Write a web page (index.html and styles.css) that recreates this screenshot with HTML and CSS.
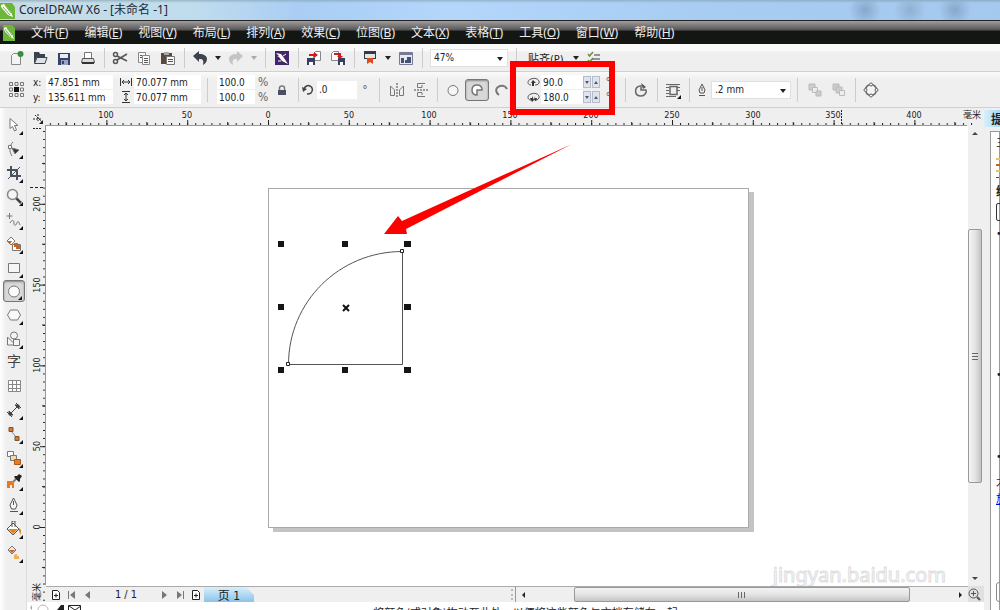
FILE: index.html
```
<!DOCTYPE html>
<html lang="zh-CN">
<head>
    <meta charset="UTF-8">
    <meta name="viewport" content="width=device-width, initial-scale=1.0">
    <title>CorelDRAW X6 - [未命名 -1]</title>
    <link rel="stylesheet" href="styles.css">
</head>
<body>
    <header class="titlebar">
        <svg class="logo" width="16" height="18" viewBox="0 0 16 18"><path fill="#6cb63a" d="M0 2h12l3 4v12H0z"/><path fill="#fff" d="M1 4l3-1 7 8 2 5-5-2-7-8z"/><path stroke="#6cb63a" d="M3 6l7 8M5 4l6 8"/></svg>
        <h1>CorelDRAW X6 - [未命名 -1]</h1>
    </header>

    <nav class="menubar">
        <svg class="doc-logo" width="12" height="16" viewBox="0 0 12 16"><path fill="#6cb63a" d="M0 0h9l3 3v13H0z"/><path fill="#fff" d="M1 3l2-1 6 7 2 5-4-2-6-7z"/><path stroke="#6cb63a" d="M2 4l6 8M4 3l5 7"/></svg>
        <a href="#">文件(<u>F</u>)</a>
        <a href="#">编辑(<u>E</u>)</a>
        <a href="#">视图(<u>V</u>)</a>
        <a href="#">布局(<u>L</u>)</a>
        <a href="#">排列(<u>A</u>)</a>
        <a href="#">效果(<u>C</u>)</a>
        <a href="#">位图(<u>B</u>)</a>
        <a href="#">文本(<u>X</u>)</a>
        <a href="#">表格(<u>T</u>)</a>
        <a href="#">工具(<u>O</u>)</a>
        <a href="#">窗口(<u>W</u>)</a>
        <a href="#">帮助(<u>H</u>)</a>
    </nav>

    <div class="toolbar">
        <button class="btn" aria-label="新建"><svg viewBox="0 0 16 16"><path fill="#f4f4f4" stroke="#888" d="M3.500 5.500l2-2h7v11h-9z"/><circle cx="12.500" cy="4" r="3" fill="#3c8a3a"/></svg></button>
        <button class="btn" aria-label="打开"><svg viewBox="0 0 16 16"><path fill="#39424f" d="M2 2h5l1 2h5v3H5l-3 7z"/><path fill="#dfe3e8" stroke="#39424f" d="M2.500 13.500l2.500-6h10l-2 6z"/></svg></button>
        <button class="btn" aria-label="保存"><svg viewBox="0 0 16 16"><path fill="#35426b" d="M2 3h12v12H2z"/><path fill="#e8ebf2" d="M4 4h8v4H4z"/><path fill="#9aa5c0" d="M5 10h7v5H5z"/><path fill="#35426b" d="M6 11h2v3H6z"/></svg></button>
        <button class="btn" aria-label="打印"><svg viewBox="0 0 16 16"><path fill="#fff" stroke="#777" d="M4.500 9V2.500h7V9"/><path fill="#dcdcdc" stroke="#555" d="M2.500 8.500h11l1 4h-13z"/><path stroke="#333" stroke-width="2" d="M2 13h12"/></svg></button>
        <span class="sep"></span>
        <button class="btn" aria-label="剪切"><svg viewBox="0 0 16 16" fill="none" stroke="#555" stroke-width="1.500"><circle cx="3.500" cy="4.500" r="2"/><circle cx="3.500" cy="11.500" r="2"/><path d="M5 6l10 5M5 10l10-6"/></svg></button>
        <button class="btn" aria-label="复制"><svg viewBox="0 0 16 16" fill="#f8f8f8" stroke="#888"><path d="M2.500 2.500h7v10h-7z"/><path d="M6.500 5.500h7v9h-7z"/><path stroke="#555" d="M8 8.500h4M8 10.500h4M8 12.500h4M4 5.500h2M4 7.500h2"/></svg></button>
        <button class="btn" aria-label="粘贴"><svg viewBox="0 0 16 16"><path fill="#5b4a3c" d="M1 3h11v11H1z"/><path fill="#aaa" d="M4 2h5v3H4z"/><path fill="#f8f8f8" stroke="#777" d="M6.500 6.500h8v8h-8z"/><path stroke="#555" d="M8 9.500h5M8 11.500h5"/></svg></button>
        <span class="sep"></span>
        <button class="btn" aria-label="撤消"><svg viewBox="0 0 16 16"><path fill="#3d424c" d="M1 6l6-5v3c5 0 8 2 8 5 0 3-2 5-4 6 1-5 0-6-4-6v3z"/></svg></button>
        <button class="drop" aria-label="撤消列表"></button>
        <button class="btn" aria-label="重做"><svg viewBox="0 0 16 16"><path fill="#c4c4c4" d="M15 6L9 1v3C4 4 1 6 1 9c0 3 2 5 4 6-1-5 0-6 4-6v3z"/></svg></button>
        <button class="drop pale" aria-label="重做列表"></button>
        <span class="sep wide"></span>
        <button class="btn" aria-label="欢迎屏幕"><svg viewBox="0 0 16 16"><path fill="#46246b" d="M1 1h14v14H1z"/><path fill="#fff" d="M2 3l5 1 3 4 4 6-6-3-3-4-2 0 2-1z"/><path stroke="#fff" d="M9 6l3-2M4 11l3 0"/></svg></button>
        <span class="sep"></span>
        <button class="btn" aria-label="导入"><svg viewBox="0 0 16 16"><path fill="#fff" stroke="#888" d="M7.500 3.500l2-2h5v9h-7z"/><path fill="#34405f" d="M1 8h8v7H1z"/><path fill="#fff" d="M3 12h4v3H3z"/><path fill="#cf1d1d" d="M3 4h5V2l4 3-4 3V6H3z"/></svg></button>
        <button class="btn" aria-label="导出"><svg viewBox="0 0 16 16"><path fill="#fff" stroke="#888" d="M1.500 3.500l2-2h5v9h-7z"/><path fill="#34405f" d="M8 8h7v7H8z"/><path fill="#fff" d="M10 12h3v3h-3z"/><path fill="#cf1d1d" d="M4 3h7v3h2l-3 3-3-3h1V5H4z"/></svg></button>
        <span class="sep"></span>
        <button class="btn" aria-label="应用程序启动器"><svg viewBox="0 0 16 16"><path fill="#333b48" d="M2 1h12v8H2z"/><path fill="#e6e6e6" d="M3 4h10v4H3z"/><path fill="#df4a1b" d="M5 8h6v6l-3-2-3 2z"/></svg></button>
        <button class="drop" aria-label="启动器列表"></button>
        <button class="btn" aria-label="选项"><svg viewBox="0 0 16 16"><path fill="#e8e8ee" stroke="#777c92" d="M1.500 2.500h13v12h-13z"/><path fill="#777c92" d="M2 3h12v2H2z"/><path fill="#46517a" d="M3 8h3v5H3zM7 10h2v3H7zM9 7h4v6H9z"/></svg></button>
        <span class="sep"></span>
        <span class="combo zoom-combo"><select aria-label="缩放级别"><option>47%</option></select></span>
        <span class="sep"></span>
        <button class="snap">贴齐(P)</button>
        <button class="drop" aria-label="贴齐列表"></button>
        <button class="btn" aria-label="显示选项"><svg viewBox="0 0 16 16" fill="none"><path stroke="#6b9438" stroke-width="1.500" d="M2 4l1.500 2L7 2M2 10l1.500 2L7 8"/><path stroke="#777" stroke-width="1.500" d="M8 5h6M6 9h8M8 13h6"/></svg></button>
    </div>

    <div class="propbar">
        <svg class="origin" width="17" height="17" viewBox="0 0 17 17" fill="none" stroke="#777"><path d="M1.500 1.500h3v3h-3zM7 1.500h3v3H7zM12.500 1.500h3v3h-3zM1.500 7h3v3h-3zM12.500 7h3v3h-3zM1.500 12.500h3v3h-3zM7 12.500h3v3H7zM12.500 12.500h3v3h-3z"/><path fill="#111" stroke="none" d="M6 6h5v5H6z"/></svg>
        <div class="pair position">
            <label for="pos-x">x:</label><input id="pos-x" value="47.851 mm">
            <label for="pos-y">y:</label><input id="pos-y" value="135.611 mm">
        </div>
        <div class="pair size">
            <label for="obj-w" aria-label="宽度"><svg width="12" height="10" viewBox="0 0 12 10"><path fill="none" stroke="#333" d="M.5 1v8M11.500 1v8M2 5h8M4 3L2 5l2 2M8 3l2 2-2 2"/></svg></label><input id="obj-w" value="70.077 mm">
            <label for="obj-h" aria-label="高度"><svg width="10" height="12" viewBox="0 0 10 12"><path fill="none" stroke="#333" d="M1 .5h8M1 11.500h8M5 2v8M3 4l2-2 2 2M3 8l2 2 2-2"/></svg></label><input id="obj-h" value="70.077 mm">
        </div>
        <span class="sep wide"></span>
        <div class="pair scale">
            <input id="scale-x" value="100.0"><label for="scale-x">%</label>
            <input id="scale-y" value="100.0"><label for="scale-y">%</label>
        </div>
        <button class="btn" aria-label="锁定比率"><svg viewBox="0 0 16 16"><path fill="none" stroke="#777" stroke-width="1.500" d="M5.500 8V6q0-2 2.500-2t2.500 2v2"/><path fill="#4a4f62" d="M4 8h8v5H4z"/></svg></button>
        <span class="sep"></span>
        <label class="rotate" for="angle" aria-label="旋转角度"><svg width="12" height="12" viewBox="0 0 12 12"><path fill="none" stroke="#444" stroke-width="1.500" d="M2 5c1-3 4-4 6-3 3 1 3 5 1 7-1 1-3 1-4 1"/><path fill="#444" d="M0 3l1 5 4-3z"/></svg></label>
        <input class="angle" id="angle" value=".0">
        <span class="degree">°</span>
        <span class="sep wide"></span>
        <button class="btn" aria-label="水平镜像"><svg viewBox="0 0 16 16" fill="none" stroke="#777"><path d="M1.500 4v9.500h4V8zM14.500 4v9.500h-4V8z"/><path stroke="#444" stroke-dasharray="2 1" d="M8 1v14"/></svg></button>
        <button class="btn" aria-label="垂直镜像"><svg viewBox="0 0 16 16" fill="none" stroke="#777"><path d="M12 1.500H4.500v4H9V3M12 14.500H4.500v-4H9V13"/><path stroke="#444" stroke-dasharray="2 1" d="M1 8h14"/></svg></button>
        <span class="sep"></span>
        <button class="btn" aria-label="椭圆形"><svg viewBox="0 0 16 16"><circle cx="8" cy="8.500" r="5" fill="#f6f6f6" stroke="#777"/></svg></button>
        <button class="btn pressed" aria-label="饼图"><svg viewBox="0 0 16 16"><path fill="#fff" stroke="#777" stroke-width="1.500" d="M8 13V8h5c0-4-3-5-5-5-3 0-5 2-5 5s2 5 5 5z"/></svg></button>
        <button class="btn" aria-label="弧形"><svg viewBox="0 0 16 16"><path fill="none" stroke="#777" stroke-width="2" d="M6 13c-3-2-4-6-1-8s7-2 9 2"/></svg></button>
        <div class="pair angles">
            <label for="start" aria-label="起始角度"><svg width="13" height="10" viewBox="0 0 13 10"><path fill="none" stroke="#555" d="M4 8C0 8 0 3 4 2c5-2 9 1 8 4-1 2-3 2-4 2"/><path fill="#333" d="M6 3l3 3H7v3H5V6H4z"/></svg></label>
            <input id="start" value="90.0"><button class="spin" aria-label="减小"></button><button class="spin up" aria-label="增大"></button><span>°</span>
            <label for="end" aria-label="结束角度"><svg width="13" height="10" viewBox="0 0 13 10"><path fill="none" stroke="#555" d="M4 8C0 8 0 3 4 2c5-2 9 1 8 4-1 2-3 2-4 2"/><path fill="#333" d="M3 6h2V4l2 4-2 2zM10 6H8V4L7 8l2 1z"/></svg></label>
            <input id="end" value="180.0"><button class="spin" aria-label="减小"></button><button class="spin up" aria-label="增大"></button><span>°</span>
        </div>
        <span class="sep"></span>
        <button class="btn" aria-label="更改方向"><svg viewBox="0 0 16 16" fill="none" stroke="#666"><path stroke-width="1.500" d="M7 4c-6 1-6 10 1 10 4 0 6-4 5-6H8V3"/><path fill="#555" stroke="none" d="M8 1l5 4-3 2z"/></svg></button>
        <span class="sep"></span>
        <button class="btn flyout" aria-label="文本换行"><svg viewBox="0 0 16 16" fill="none" stroke="#666"><path d="M1 2.500h14M1 5.500h3M1 8.500h3M1 11.500h3M1 14.500h10M12 5.500h3M12 8.500h3"/><path fill="#eee" stroke-width="1.500" d="M5 4.500h7v8H5z"/></svg></button>
        <span class="sep"></span>
        <label class="pen" for="outline" aria-label="轮廓宽度"><svg width="10" height="14" viewBox="0 0 10 14" fill="none" stroke="#555"><path d="M5 1L2 7l1 3h4l1-3zM5 4v4M2 12.500h6"/></svg></label>
        <span class="combo outline-combo"><select id="outline"><option>.2 mm</option></select></span>
        <span class="sep wide"></span>
        <button class="btn" aria-label="到图层前面"><svg viewBox="0 0 16 16" fill="#ccc" stroke="#bbb"><path d="M2 2h6v6H2z"/><path fill="#eee" d="M5.500 5.500h5v5h-5z"/><path d="M9 9h5v5H9z"/></svg></button>
        <button class="btn" aria-label="到图层后面"><svg viewBox="0 0 16 16" fill="#ccc" stroke="#bbb"><path d="M2 2h6v6H2z"/><path d="M5 5h6v6H5z"/><path fill="#eee" d="M8.500 8.500h5v5h-5z"/></svg></button>
        <span class="sep"></span>
        <button class="btn" aria-label="转换为曲线"><svg viewBox="0 0 16 16" fill="#f4f4f4" stroke="#666"><circle cx="8" cy="8" r="5.500" stroke-width="1.500"/><circle cx="8" cy="2.500" r="1.500"/><circle cx="8" cy="13.500" r="1.500"/><circle cx="2.500" cy="8" r="1.500"/><circle cx="13.500" cy="8" r="1.500"/></svg></button>
    </div>

    <div class="workspace">
        <aside class="toolbox">
            <button class="tool flyout" aria-label="选择"><svg viewBox="0 0 16 16"><path fill="#fff" stroke="#777" d="M4 1.500v10l2.500-2 2 4.500 2-1-2-4.500H12z"/></svg></button>
            <button class="tool flyout" aria-label="形状"><svg viewBox="0 0 16 16" fill="none" stroke="#777"><path d="M7 1C3 5 3 10 6 15"/><path fill="#fff" d="M2.500 4.500h3v3h-3z"/><path fill="#333" d="M6 7l7 2-4 4z"/></svg></button>
            <button class="tool flyout" aria-label="裁剪"><svg viewBox="0 0 16 16" fill="none" stroke="#4a5260" stroke-width="2"><path d="M5 1v10h10M1 5h10v10"/><path stroke-width="1" d="M2 14L14 2"/></svg></button>
            <button class="tool flyout" aria-label="缩放"><svg viewBox="0 0 16 16"><path stroke="#444" stroke-width="2.500" d="M10 10l5 5"/><circle cx="6.500" cy="6.500" r="5" fill="#f4f7f9" stroke="#888" stroke-width="1.500"/></svg></button>
            <button class="tool flyout" aria-label="手绘"><svg viewBox="0 0 16 16" fill="none" stroke="#777"><path d="M3.500 1v6M.5 4h6M4 11c2-4 4-3 4 0s2 3 3 0 2-1 3 2"/></svg></button>
            <button class="tool flyout" aria-label="智能填充"><svg viewBox="0 0 16 16"><path fill="#fff" stroke="#777" d="M6.500 8.500h8v6h-8zM5 1l4 4-4 4-4-4z"/><path fill="#c9621e" d="M1 5h5l-2 3zM8 7h4v2h2v4h-4v-2H8z"/></svg></button>
            <button class="tool flyout" aria-label="矩形"><svg viewBox="0 0 16 16"><path fill="#f5f6f7" stroke="#777" d="M2.500 3.500h11v9h-11z"/></svg></button>
            <button class="tool flyout active" aria-label="椭圆形"><svg viewBox="0 0 16 16"><circle cx="8" cy="8.500" r="5.500" fill="#fafafa" stroke="#777"/></svg></button>
            <button class="tool flyout" aria-label="多边形"><svg viewBox="0 0 16 16"><path fill="#fafafa" stroke="#777" d="M4.500 3h7l3 5-3 5h-7l-3-5z"/></svg></button>
            <button class="tool flyout" aria-label="基本形状"><svg viewBox="0 0 16 16" fill="#f4f4f4" stroke="#777"><path d="M1.500 6v8h8z"/><path d="M7.500 8.500h6v6h-6z"/><circle cx="8" cy="4.500" r="3.500"/></svg></button>
            <button class="tool glyph">字</button>
            <button class="tool" aria-label="表格"><svg viewBox="0 0 16 16"><path fill="#fff" stroke="#888" d="M2.500 2.500h12v11h-12zM6.500 3v10M10.500 3v10M3 6.500h11M3 10.500h11"/></svg></button>
            <button class="tool flyout" aria-label="度量"><svg viewBox="0 0 16 16" fill="none" stroke="#444"><path d="M3 13L13 3M1 10l5 5M10 1l5 5"/><path fill="#444" d="M3 13V9l4 4zM13 3v4L9 3z"/></svg></button>
            <button class="tool flyout" aria-label="连接器"><svg viewBox="0 0 16 16"><path fill="none" stroke="#7784a0" d="M5 5l6 7"/><path fill="#d4792a" stroke="#7a5537" d="M3 1.500h4v4H3zM9 10.500h4v4H9z"/></svg></button>
            <button class="tool flyout" aria-label="调和"><svg viewBox="0 0 16 16" stroke="#777"><path fill="#fff" d="M1.500 1.500h6v5h-6z"/><path fill="#f2dba4" d="M4.500 5.500h6v5h-6z"/><path fill="#ea7a20" stroke="#a75a1c" d="M8.500 9.500h6v5h-6z"/></svg></button>
            <button class="tool flyout" aria-label="滴管"><svg viewBox="0 0 16 16"><path stroke="#777" stroke-width="2" d="M6 10l5-5"/><path fill="#222" d="M9 3l2 0 2-2 3 2-2 3v2l-1 1-5-5z"/><path fill="#e77a1e" d="M1 8h7v7H6v-3H4v3H1z"/></svg></button>
            <button class="tool flyout" aria-label="轮廓笔"><svg viewBox="0 0 16 16" fill="#f8f8f8" stroke="#555"><path d="M7.500 1L4 8l1.500 4h4L11 8zM7.500 4v4M4 14.500h8"/></svg></button>
            <button class="tool flyout" aria-label="填充"><svg viewBox="0 0 16 16"><path fill="#fff" stroke="#555" d="M7 2l6 6-6 6-6-6z"/><path fill="#df861f" d="M2 8h10l-5 5zM13 7l2 2v5l-2-4z"/><path fill="none" stroke="#555" d="M6 6V0h3v6"/></svg></button>
            <button class="tool flyout" aria-label="交互式填充"><svg viewBox="0 0 16 16"><path fill="#e8e8e8" stroke="#777" d="M6 1l4 4-4 4-4-4z"/><path fill="#c9621e" d="M3 5h6L6 8z"/><path fill="#edb05d" d="M9 9h2v2h2v3H8v-3z"/></svg></button>
        </aside>

        <main class="drawing">
            <svg class="ruler-top">
                <defs>
                    <pattern id="h-minor" x="241" width="8.080" height="19" patternUnits="userSpaceOnUse"><path fill="#222" d="M0 15h1v2H0z"/></pattern>
                    <pattern id="h-major" x="241" width="80.800" height="19" patternUnits="userSpaceOnUse"><path fill="#222" d="M0 12h1v5H0zM40 14h1v3h-1z"/></pattern>
                </defs>
                <rect x="20" width="932" height="19" fill="url(#h-minor)"/>
                <rect x="20" width="932" height="19" fill="url(#h-major)"/>
                <g text-anchor="middle">
                    <text x="79" y="10">100</text><text x="160" y="10">50</text><text x="241" y="10">0</text>
                    <text x="322" y="10">50</text><text x="402" y="10">100</text><text x="483" y="10">150</text>
                    <text x="564" y="10">200</text><text x="645" y="10">250</text><text x="726" y="10">300</text>
                    <text x="806" y="10">350</text><text x="887" y="10">400</text><text x="945" y="10">毫米</text>
                </g>
                <path fill="none" stroke="#222" stroke-dasharray="2 1" d="M814.500 2v16M8 7l8 8M11 6v7M6 11h9"/>
                <path fill="#222" d="M16 16v-4l-4 4z"/>
            </svg>
            <svg class="ruler-left">
                <defs>
                    <pattern id="v-minor" y="401" width="19" height="8.080" patternUnits="userSpaceOnUse"><path fill="#222" d="M16 0h2v1h-2z"/></pattern>
                    <pattern id="v-major" y="401" width="19" height="80.800" patternUnits="userSpaceOnUse"><path fill="#222" d="M13 0h5v1h-5zM15 40h3v1h-3z"/></pattern>
                </defs>
                <rect width="19" height="100%" fill="url(#v-minor)"/>
                <rect width="19" height="100%" fill="url(#v-major)"/>
                <g text-anchor="middle">
                    <text transform="translate(13 78) rotate(-90)">200</text>
                    <text transform="translate(13 159) rotate(-90)">150</text>
                    <text transform="translate(13 239) rotate(-90)">100</text>
                    <text transform="translate(13 320) rotate(-90)">50</text>
                    <text transform="translate(13 401) rotate(-90)">0</text>
                    <text transform="translate(13 466) rotate(-90)">毫米</text>
                </g>
                <path stroke="#222" stroke-dasharray="3 2" d="M3 61.500h15"/>
                <path stroke="#222" stroke-dasharray="2 1" d="M6 2.500h8"/>
            </svg>
            <svg class="canvas">
                <rect x="227" y="66" width="481" height="340" fill="#c4c4c4"/>
                <rect x="222.500" y="62.500" width="480" height="339" fill="#fff" stroke="#aaa"/>
                <path fill="none" stroke="#555" d="M356.500 125.500C293 125.500 242.500 176 242.500 238.500H356.500z"/>
                <path fill="#fff" stroke="#222" d="M354.500 123.500h3v3h-3zM240.500 236.500h3v3h-3z"/>
                <path fill="#151515" d="M232 115h6v6h-6zM296 115h6v6h-6zM358 115h7v6h-7zM232 178h6v6h-6zM358 178h7v6h-7zM232 241h6v6h-6zM296 241h6v6h-6zM358 241h7v6h-7z"/>
                <path stroke="#111" stroke-width="2" d="M297 179l6 6M303 179l-6 6"/>
                <text class="watermark" x="900" y="456">jingyan.baidu.com</text>
            </svg>
            <div class="vscroll">
                <span class="arrow up"></span>
                <div class="track"><div class="thumb"><i></i></div></div>
                <span class="arrow down"></span>
            </div>
            <div class="pagebar">
                <div class="pages">
                    <button aria-label="在前面添加页"><svg width="10" height="12" viewBox="0 0 10 12"><path fill="#fff" stroke="#222" d="M1.500 1.500h5l2 2v7h-7zM3 6.500h4M5 4.500v4"/></svg></button>
                    <button aria-label="首页"><svg width="8" height="8" viewBox="0 0 8 8"><path fill="#777" d="M0 0h1v8H0zM7 0v8L2 4z"/></svg></button>
                    <button aria-label="上一页"><svg width="8" height="8" viewBox="0 0 8 8"><path fill="#777" d="M6 0v8L1 4z"/></svg></button>
                    <span class="count">1 / 1</span>
                    <button aria-label="下一页"><svg width="8" height="8" viewBox="0 0 8 8"><path fill="#777" d="M2 0v8l5-4z"/></svg></button>
                    <button aria-label="末页"><svg width="8" height="8" viewBox="0 0 8 8"><path fill="#777" d="M7 0h1v8H7zM1 0v8l5-4z"/></svg></button>
                    <button aria-label="在后面添加页"><svg width="10" height="12" viewBox="0 0 10 12"><path fill="#fff" stroke="#222" d="M1.500 1.500h5l2 2v7h-7zM3 6.500h4M5 4.500v4"/></svg></button>
                    <button class="tab">页 1</button>
                    <span class="grip"></span>
                </div>
                <div class="hscroll">
                    <span class="arrow left"></span>
                    <div class="track"><div class="thumb"><i></i></div></div>
                    <span class="arrow right"></span>
                </div>
            </div>
            <button class="navigator" aria-label="导航器"><svg width="13" height="13" viewBox="0 0 13 13" fill="none" stroke="#555"><circle cx="5.500" cy="5.500" r="4.500"/><path d="M3 5.500h5M5.500 3v5"/><path stroke-width="2" d="M9 9l3 3"/></svg></button>
            <footer class="palette">
                <svg width="56" height="8" viewBox="0 0 56 8"><path fill="#aaa" d="M5 3v5L3 6z"/><circle cx="16" cy="8" r="5" fill="#fff" stroke="#bbb"/><path fill="#222" d="M30 8l4-5h3v5z"/><path fill="#fff" stroke="#222" d="M41.500 3.500h12v8h-12zM42 4l6 4 6-4"/></svg>
                <p>将颜色(或对象)拖动至此处，以便将这些颜色与文档存储在一起</p>
            </footer>
        </main>

        <aside class="docker">
            <h2>提示</h2>
            <div class="hints">
                <p class="name">三点椭圆形</p>
                <svg width="10" height="17" viewBox="0 0 10 17"><path stroke="#e3c65c" stroke-width="2" d="M0 2h8M0 14h8"/><path stroke="#c9621e" stroke-width="2" d="M0 8h8"/></svg>
                <h3>绘制</h3>
                <div class="box"></div>
                <ul>
                    <li>要绘制椭圆形</li>
                    <li>要绘制圆形</li>
                    <li>要从中心绘制</li>
                </ul>
                <p>才能</p>
                <a href="#">放大</a>
                <button class="more" aria-label="更多"></button>
            </div>
        </aside>
    </div>

    <svg class="callout" width="106" height="174" viewBox="510 61 106 174">
        <rect x="513" y="64" width="99" height="48" fill="none" stroke="#fd0000" stroke-width="6"/>
        <path fill="#fd0000" d="M384 234l14-18 4 5 170-77-166 85 1 5z"/>
    </svg>
</body>
</html>
```
FILE: styles.css
```
* {
    box-sizing: border-box;
}
body {
    margin: 0;
    height: 100vh;
    display: flex;
    flex-direction: column;
    overflow: hidden;
    background: #efefef;
    color: #222;
    font-family: "DejaVu Sans Condensed", "Noto Sans CJK SC", sans-serif;
    font-size: 10px;
}
button {
    padding: 0;
    border: none;
    background: none;
    font: inherit;
    color: inherit;
    flex: none;
}
input, select {
    border: none;
    background: #fff;
    font: inherit;
    color: #222;
    min-width: 0;
}
svg {
    display: block;
    flex: none;
}

/* title and menu */
.titlebar {
    height: 20px;
    flex: none;
    display: flex;
    align-items: center;
    gap: 3px;
    background:
        radial-gradient(circle at 865px 10px, #87a8cb, transparent 16px),
        radial-gradient(circle at 910px 10px, #8fb0d2, transparent 16px),
        radial-gradient(circle at 955px 10px, #87a8cb, transparent 16px),
        linear-gradient(#7f9cad99, transparent 3px),
        linear-gradient(90deg, #c9dce4, #bfdcee 20%, #a9cdf3 30%, #b4d6fb 45%, #a8ccf2 70%, #a4c8ee);
}
.titlebar h1 {
    margin: 0;
    font: 12px/18px "Noto Sans", "Noto Sans CJK SC", sans-serif;
    color: #1c2a36;
}
.menubar {
    height: 24px;
    flex: none;
    display: flex;
    align-items: center;
    gap: 16px;
    padding-left: 3px;
    border-top: 1px solid #222;
    background: linear-gradient(#a39d9d, #555 9px, #141614 10px);
}
.menubar a {
    color: #eee;
    font: 12px/20px "Noto Sans", "Noto Sans CJK SC", sans-serif;
    text-decoration: none;
    white-space: nowrap;
}

/* toolbars */
.toolbar, .propbar {
    display: flex;
    align-items: center;
    flex: none;
    padding-left: 4px;
    border-bottom: 1px solid #d0d0d0;
    background: linear-gradient(#f9f9f9 7px, #efefef 8px);
}
.toolbar {
    height: 28px;
}
.propbar {
    height: 36px;
    padding-left: 8px;
    background: linear-gradient(#fafafa, #efefef 8px);
}
.btn {
    position: relative;
    width: 24px;
    height: 22px;
    display: flex;
    align-items: center;
    justify-content: center;
}
.btn svg {
    width: 16px;
    height: 16px;
}
.btn.pressed {
    border: 1px solid #777;
    border-radius: 3px;
    background: #d8d8d8;
    box-shadow: inset 0 1px 2px #888;
}
.sep {
    flex: none;
    width: 8px;
    height: 20px;
    background: linear-gradient(#ccc, #ccc) center / 1px 100% no-repeat;
}
.sep.wide {
    width: 10px;
}
.propbar .sep {
    height: 24px;
}
.propbar .sep.wide {
    width: 12px;
}
.drop {
    width: 12px;
    height: 20px;
}
.drop::before, .combo::after {
    content: "";
    display: block;
    margin: 0 auto;
    width: 0;
    border: 3px solid transparent;
    border-top: 4px solid #222;
    border-bottom: none;
}
.drop.pale::before {
    border-top-color: #aaa;
}
.combo {
    position: relative;
    display: flex;
    height: 18px;
    background: #fff;
    border: 1px solid #e0e0e0;
}
.combo select {
    appearance: none;
    flex: 1;
    padding: 0 3px;
}
.combo::after {
    position: absolute;
    right: 4px;
    top: 7px;
}
.zoom-combo {
    width: 78px;
    margin: 0 4px;
}
.outline-combo {
    width: 80px;
}
.snap {
    margin-left: 8px;
    width: 42px;
    font-size: 11px;
    text-align: left;
    white-space: nowrap;
}
.pair {
    flex: none;
    display: grid;
    grid-auto-rows: 15px;
    align-items: center;
}
.pair input {
    height: 14px;
    padding: 0 2px;
}
.pair label svg {
    margin: 0 auto;
}
.position {
    margin-left: 8px;
    grid-template-columns: 13px 67px;
}
.size {
    margin-left: 4px;
    grid-template-columns: 17px 67px;
}
.scale {
    margin-left: 4px;
    grid-template-columns: 38px 15px;
}
.scale label {
    color: #666;
    font-size: 12px;
    padding-left: 3px;
}
.rotate {
    width: 15px;
}
.angle {
    width: 40px;
    height: 18px;
    padding: 0 2px;
}
.degree {
    width: 16px;
    text-align: center;
    font-size: 12px;
    color: #666;
}
.angles {
    margin: 0 10px 0 12px;
    grid-template-columns: 16px 42px 9px 9px 10px;
}
.angles span {
    text-align: right;
    font-size: 12px;
    color: #666;
}
.spin {
    width: 8px;
    height: 12px;
    border: 1px solid #b5bccb;
    background: #dfe3ee;
}
.spin::before {
    content: "";
    display: block;
    width: 0;
    margin: 0 auto;
    border: 2px solid transparent;
    border-top: 3px solid #556;
    border-bottom: none;
}
.spin.up::before {
    border: 2px solid transparent;
    border-top: none;
    border-bottom: 3px solid #556;
}
.pen {
    width: 18px;
    padding-left: 4px;
}
.flyout::after {
    content: "";
    position: absolute;
    right: 4px;
    bottom: 2px;
    border-left: 4px solid transparent;
    border-bottom: 4px solid #111;
}

/* workspace */
.workspace {
    flex: 1;
    min-height: 0;
    display: flex;
}
.toolbox {
    width: 27px;
    flex: none;
    display: flex;
    flex-direction: column;
    justify-content: space-between;
    padding: 6px 2px 46px 3px;
    border-right: 1px solid #ddd;
    background: linear-gradient(90deg, #fff, #efefef 6px);
}
.tool {
    position: relative;
    width: 22px;
    height: 22px;
    display: flex;
    align-items: center;
    justify-content: center;
}
.tool svg {
    width: 16px;
    height: 16px;
}
.tool.flyout::after {
    right: 2px;
    bottom: 1px;
}
.tool.active {
    border: 1px solid #777;
    border-radius: 3px;
    background: #d8d8d8;
    box-shadow: inset 0 1px 2px #888;
}
.glyph {
    font-size: 14px;
    line-height: 14px;
    padding-bottom: 4px;
    color: #444;
}
.drawing {
    flex: 1;
    min-width: 0;
    display: grid;
    grid-template-columns: 19px 1fr 16px;
    grid-template-rows: 18px 1fr 16px 8px;
}
.ruler-top, .ruler-left {
    width: 100%;
    height: 100%;
    font-size: 9px;
    fill: #222;
}
.ruler-top {
    grid-column: 1 / 4;
}
.ruler-left {
    grid-row: 2 / 4;
}
.canvas {
    width: 100%;
    height: 100%;
    background: #fff;
    box-shadow: -1px -1px 0 #999;
}
.watermark {
    font: 20px "Noto Sans", sans-serif;
    text-anchor: end;
    fill: #fff;
    stroke: #ddd;
}
.vscroll {
    display: flex;
    flex-direction: column;
    align-items: center;
    padding: 6px 2px 6px 0;
}
.vscroll .track {
    flex: 1;
    align-self: stretch;
    display: flex;
    flex-direction: column;
    padding: 94px 0;
}
.thumb {
    flex: 1;
    display: flex;
    align-items: center;
    justify-content: center;
    border: 1px solid #999;
    border-radius: 2px;
    background: linear-gradient(90deg, #f4f4f4, #e4e4e4 50%, #c4c4c4);
}
.thumb i {
    width: 6px;
    height: 7px;
    background: repeating-linear-gradient(#666 0 1px, transparent 1px 3px);
}
.arrow {
    border: 3px solid transparent;
}
.arrow.up {
    border-top: none;
    border-bottom-color: #444;
}
.arrow.down {
    border-bottom: none;
    border-top-color: #444;
}
.arrow.left {
    border-left: none;
    border-right-color: #222;
}
.arrow.right {
    border-right: none;
    border-left-color: #222;
}
.pagebar {
    display: flex;
    min-width: 0;
    border-top: 1px solid #aaa;
}
.pages {
    flex: 1;
    display: flex;
    align-items: center;
    padding-left: 2px;
    border-right: 1px solid #999;
}
.pages button {
    width: 16px;
    display: flex;
    justify-content: center;
}
.pages .count {
    width: 60px;
    text-align: center;
    font-size: 11px;
}
.pages .tab {
    width: 50px;
    height: 15px;
    align-items: center;
    font-size: 12px;
    background: linear-gradient(#d8effc, #8cc3e9);
    clip-path: polygon(0 0, 42px 0, 50px 8px, 50px 15px, 0 15px);
}
.grip {
    margin-left: auto;
    width: 4px;
    height: 11px;
    border-left: 2px dotted #bbb;
}
.hscroll {
    flex: 0 0 49%;
    display: flex;
    align-items: center;
    padding: 0 6px;
}
.hscroll .track {
    flex: 1;
    align-self: stretch;
    display: flex;
    padding: 0 49px;
}
.hscroll .thumb {
    background: linear-gradient(#f4f4f4, #e4e4e4 50%, #c4c4c4);
}
.hscroll i {
    width: 8px;
    height: 6px;
    background: repeating-linear-gradient(90deg, #666 0 1px, transparent 1px 3px);
}
.navigator {
    display: flex;
    align-items: center;
    background: #e0e0e0;
}
.palette {
    grid-column: 1 / 4;
    display: flex;
    overflow: hidden;
    background: #fff;
}
.palette p {
    flex: 1;
    margin: 0;
    padding-right: 16px;
    text-align: center;
    font: 11px/20px "Noto Sans CJK SC", sans-serif;
}

/* docker */
.docker {
    width: 16px;
    flex: none;
    overflow: hidden;
    white-space: nowrap;
    font-family: "Noto Sans CJK SC", sans-serif;
}
.docker h2 {
    margin: 2px 0 4px;
    padding-left: 7px;
    font-size: 12px;
    line-height: 17px;
    background: linear-gradient(90deg, #d6f0fb, #a8d8f5);
}
.hints {
    height: 100%;
    margin-left: 6px;
    padding: 2px 0 0 5px;
    border: 1px solid #999;
    background: #fff;
    font-size: 11px;
    line-height: 16px;
}
.hints p, .hints ul {
    margin: 0;
    padding: 0;
}
.hints svg {
    margin: 7px 0 3px;
}
.hints h3 {
    margin: 0;
    padding-top: 4px;
    border-top: 1px solid #448;
    font-size: 12px;
    line-height: 18px;
}
.box {
    width: 60px;
    height: 18px;
    margin: 3px 0;
    border: 1px solid #333;
    border-radius: 2px;
}
.hints ul {
    list-style: none;
}
.hints li::before {
    content: "•";
    padding-right: 8px;
    font-family: "DejaVu Sans Condensed", sans-serif;
}
.hints li {
    height: 141px;
}
.hints li:nth-child(2) {
    height: 82px;
}
.hints li:last-child {
    height: 27px;
}
.more {
    display: block;
    width: 60px;
    height: 20px;
    margin-top: 76px;
    border: 1px solid #888;
    border-radius: 3px;
}

/* red marker drawn over the window */
.callout {
    position: absolute;
    left: 510px;
    top: 61px;
    overflow: visible;
    pointer-events: none;
}
```
